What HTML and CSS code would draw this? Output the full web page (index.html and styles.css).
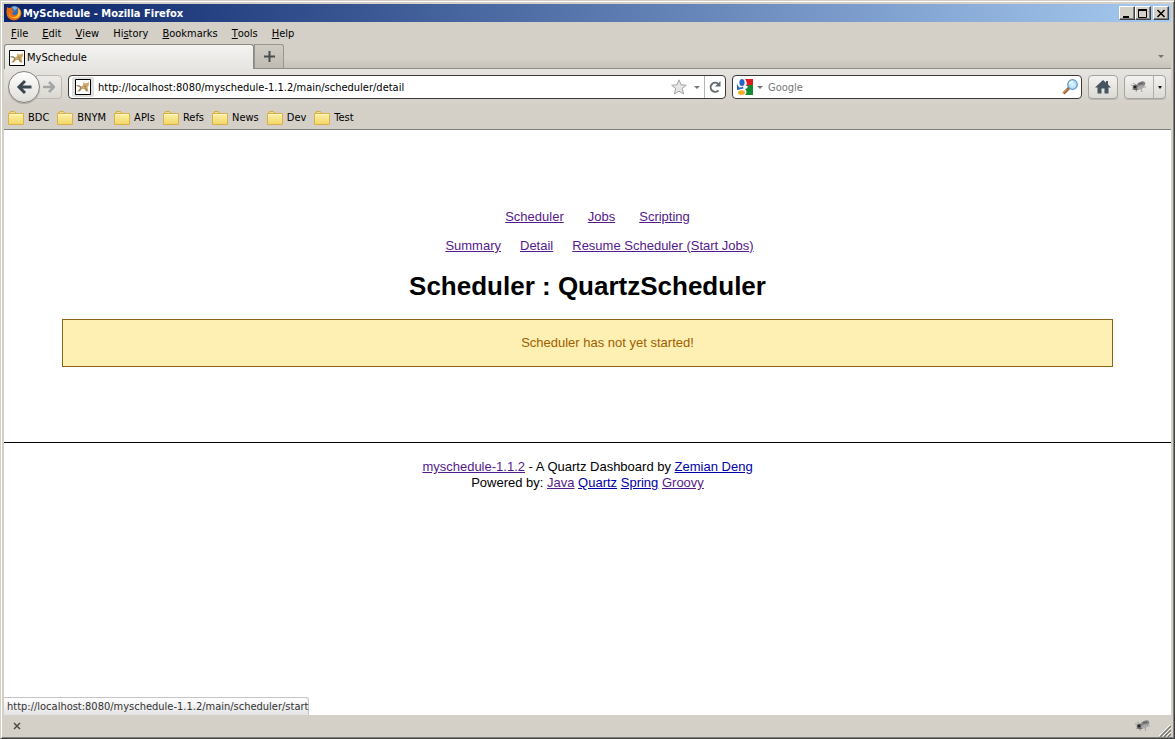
FILE: index.html
```html
<!DOCTYPE html>
<html lang="en">
<head>
<meta charset="utf-8">
<title>MySchedule</title>
<link rel="stylesheet" href="styles.css">
</head>
<body>
<svg class="symbols" aria-hidden="true">
  <defs>
    <linearGradient id="folder-fill" x1="0" y1="0" x2="0" y2="1"><stop offset="0" stop-color="#fdf2a8"/><stop offset="1" stop-color="#f2d566"/></linearGradient>
    <radialGradient id="lens-fill"><stop offset="0" stop-color="#e2f6ff"/><stop offset="1" stop-color="#a5d8fa"/></radialGradient>
    <symbol id="folder" viewBox="0 0 16 16">
      <path d="M1.500 14V3.500L2.500 1.500H6.500L8 3.500H14.500V14Z" fill="#f5dc85" stroke="#d6ab45"/>
      <path d="M.5 3.500H15.500V14.500H.5Z" fill="url(#folder-fill)" stroke="#d9b04c"/>
      <path d="M1.500 4.500H14.500" stroke="#fff7c8"/>
    </symbol>
    <symbol id="cat" viewBox="0 0 16 16">
      <path d="M.5 .5H15.500V15.500H.5Z" fill="#fff" stroke="#000"/>
      <path d="M1.500 7L4 6.500L6.500 7.500L8 6L8.500 3L10 4.500L12.500 4L13.500 2.500L14 6L12.500 8L13.500 12.500H11L9.500 10L7 10L5 12.500H2L4 10.500L5 8.500Z" fill="#cfa968"/>
      <path d="M1.500 6.500L5 7L6 9L4 12M9 7L11 8M12 12L10 9" fill="none" stroke="#75705f" stroke-width=".8"/>
    </symbol>
    <symbol id="bug" viewBox="0 0 18 16">
      <path d="M1 6L5 7M2 11L5 9M6 13L7 10M12 13L11 10M16 8L12 8M3 4L6 6" stroke="#a0a09c" fill="none"/>
      <ellipse cx="6" cy="8.500" rx="3.300" ry="2.800" fill="#666"/>
      <ellipse cx="11" cy="5.500" rx="4.500" ry="2.800" transform="rotate(-25 11 5.500)" fill="#858585"/>
      <ellipse cx="10.500" cy="8.500" rx="3.500" ry="1.800" transform="rotate(-20 10.500 8.500)" fill="#aaa"/>
      <circle cx="5" cy="8" r="1.300" fill="#222"/><path d="M9 5L13 4" stroke="#555"/>
    </symbol>
  </defs>
</svg>
<div class="window">
  <header class="titlebar">
    <svg class="icon16" viewBox="0 0 16 16" aria-hidden="true">
      <circle cx="8.500" cy="7.500" r="6.500" fill="#356ab5"/>
      <path d="M6 2Q9 0 12 3Q9 4 9 6Z" fill="#79b4e4"/>
      <path d="M1 2Q2 3 4 3Q6 2 7 3Q5 4 6 5L8 6Q8 7 6 8Q7 11 10 10Q13 9 12 5L11 2Q15 4 15.500 8Q15 15 8 15.500Q1 15 .5 8Q.4 5 1 2Z" fill="#e66a10"/>
      <path d="M12 3Q16 7 13.500 11Q11 14 7 13Q3 12 3 8Q4 13 9 12Q13 11 12 3Z" fill="#ffc52e"/>
    </svg>
    <span class="title">MySchedule - Mozilla Firefox</span>
    <div class="window-buttons">
      <button aria-label="Minimize"><svg viewBox="0 0 12 11"><path d="M2 9H8" stroke="#000" stroke-width="2"/></svg></button>
      <button aria-label="Maximize"><svg viewBox="0 0 12 11"><path d="M1.500 1V9.500H9.500V1" fill="none" stroke="#000"/><path d="M1 2H10" stroke="#000" stroke-width="2"/></svg></button>
      <button aria-label="Close" class="close"><svg viewBox="0 0 12 11"><path d="M2.500 2L9.500 9M9.500 2L2.500 9" stroke="#000" stroke-width="1.500"/></svg></button>
    </div>
  </header>
  <nav class="menubar" aria-label="Menu">
    <button><u>F</u>ile</button><button><u>E</u>dit</button><button><u>V</u>iew</button><button>Hi<u>s</u>tory</button><button><u>B</u>ookmarks</button><button><u>T</u>ools</button><button><u>H</u>elp</button>
  </nav>
  <div class="tabs">
    <button class="tab"><svg class="icon16" aria-hidden="true"><use href="#cat"/></svg>MySchedule</button>
    <button class="new-tab" aria-label="New tab"><svg viewBox="0 0 11 11"><path d="M5.500 0V11M0 5.500H11" stroke="#4b4e50" stroke-width="2"/></svg></button>
    <button class="all-tabs" aria-label="List all tabs"><svg class="arrow" viewBox="0 0 6 3"><path d="M0 0H6L3 3Z" fill="#77736c"/></svg></button>
  </div>
  <div class="navbar">
    <div class="history">
      <button class="back" aria-label="Back"><svg viewBox="0 0 16 16"><path d="M9 2L3 8L9 14M3 8H15.500" fill="none" stroke="#394751" stroke-width="3"/></svg></button>
      <button class="forward" aria-label="Forward"><svg viewBox="0 0 12 12"><path d="M6 1L11 6L6 11M11 6H0" fill="none" stroke="#a2a6a7" stroke-width="2.500"/></svg></button>
    </div>
    <form class="field address">
      <span class="site"><svg class="icon16" aria-hidden="true"><use href="#cat"/></svg></span>
      <input aria-label="Address" value="http://localhost:8080/myschedule-1.1.2/main/scheduler/detail">
      <svg class="star" viewBox="0 0 16 16" aria-hidden="true"><path d="M8 .8L10 5.800L15.300 6.200L11.300 9.600L12.600 15L8 12.200L3.400 15L4.700 9.600L.7 6.200L6 5.800Z" fill="#e5e5e5" stroke="#a4a4a4"/></svg>
      <svg class="arrow" viewBox="0 0 6 3" aria-hidden="true"><path d="M0 0H6L3 3Z" fill="#777"/></svg>
      <button type="button" class="reload" aria-label="Reload"><svg viewBox="0 0 12 12"><path d="M9.500 9.300A4.500 4.500 0 1 1 9 2.800" fill="none" stroke="#666c70" stroke-width="2"/><path d="M11.500 0V5.500H6Z" fill="#666c70"/></svg></button>
    </form>
    <form class="field search">
      <svg class="icon16" viewBox="0 0 16 16" aria-hidden="true"><path d="M0 0H16V16H0Z" fill="#fff"/><path d="M8 0H16V7H9Q11 4 8 0Z" fill="#e01b20"/><path d="M10 6H16V16H8Q11 13 8 10Q12 9 10 6Z" fill="#158a35"/><path d="M0 5L2 8V10H0Z" fill="#2b64c8"/><ellipse cx="5" cy="3.500" rx="2.600" ry="3.500" fill="#2b64c8"/><path d="M0 8Q4 9 6 7.500L6.500 9.500Q3 10 0 11Z" fill="#2b64c8"/><ellipse cx="4.500" cy="13.500" rx="3.500" ry="2.300" fill="#f5ae24"/></svg>
      <svg class="arrow" viewBox="0 0 6 3" aria-hidden="true"><path d="M0 0H6L3 3Z" fill="#777"/></svg>
      <input aria-label="Search" placeholder="Google">
      <svg class="icon16" viewBox="0 0 16 16" aria-hidden="true"><path d="M7 9L1.500 14.500" stroke="#9d6238" stroke-width="3"/><path d="M5.500 9.800L1 14.300" stroke="#deb07a"/><circle cx="10.500" cy="5.500" r="4.800" fill="url(#lens-fill)" stroke="#6598c3" stroke-width="1.200"/><path d="M7.500 5Q8 2.500 11 2.300" fill="none" stroke="#fff" stroke-width="1.300"/></svg>
    </form>
    <button class="tool" aria-label="Home"><svg class="icon16" viewBox="0 0 16 16"><path d="M8 1L0 8.500H2.500V14.500H6.500V9.500H9.500V14.500H13.500V8.500H16L13 5.600V2H11V3.800Z" fill="#45545f"/></svg></button>
    <div class="split">
      <button class="bug" aria-label="Firebug"><svg viewBox="0 0 18 16"><use href="#bug"/></svg></button>
      <button class="more" aria-label="Firebug menu"><svg class="arrow" viewBox="0 0 6 3"><path d="M1 0H5L3 3Z" fill="#000"/></svg></button>
    </div>
  </div>
  <nav class="bookmarks" aria-label="Bookmarks">
    <button><svg class="icon16"><use href="#folder"/></svg>BDC</button>
    <button><svg class="icon16"><use href="#folder"/></svg>BNYM</button>
    <button><svg class="icon16"><use href="#folder"/></svg>APIs</button>
    <button><svg class="icon16"><use href="#folder"/></svg>Refs</button>
    <button><svg class="icon16"><use href="#folder"/></svg>News</button>
    <button><svg class="icon16"><use href="#folder"/></svg>Dev</button>
    <button><svg class="icon16"><use href="#folder"/></svg>Test</button>
  </nav>
  <div class="viewport">
    <main>
      <nav class="links primary"><a class="visited" href="#scheduler">Scheduler</a><a class="visited" href="#jobs">Jobs</a><a class="visited" href="#scripting">Scripting</a></nav>
      <nav class="links secondary"><a class="visited" href="#summary">Summary</a><a class="visited" href="#detail">Detail</a><a class="visited" href="#start">Resume Scheduler (Start Jobs)</a></nav>
      <h1>Scheduler : QuartzScheduler</h1>
      <p class="warning">Scheduler has not yet started!</p>
    </main>
    <footer>
      <div><a class="visited" href="#home">myschedule-1.1.2</a> - A Quartz Dashboard by <a href="#author">Zemian Deng</a></div>
      <div>Powered by: <a class="visited" href="#java">Java</a> <a href="#quartz">Quartz</a> <a href="#spring">Spring</a> <a class="visited" href="#groovy">Groovy</a></div>
    </footer>
    <div class="link-status">http://localhost:8080/myschedule-1.1.2/main/scheduler/start</div>
  </div>
  <div class="statusbar">
    <button aria-label="Close add-on bar"><svg class="x" viewBox="0 0 8 8"><path d="M1 1L7 7M7 1L1 7" stroke="#4b4b48" stroke-width="1.500"/></svg></button>
    <button class="addon" aria-label="Firebug"><svg viewBox="0 0 18 16"><use href="#bug"/></svg></button>
    <svg class="grip" viewBox="0 0 12 12" aria-hidden="true"><path d="M1 12L12 1M5 12L12 5M9 12L12 9" stroke="#7c7970" stroke-width="1.500"/><path d="M0 11L11 0M4 11L12 3M8 11L12 7" stroke="#fff"/></svg>
  </div>
</div>
</body>
</html>
```

FILE: styles.css
```css
* { box-sizing: border-box; }
body { margin: 0; background: #d4d0c8; }
svg { display: block; flex: none; }
.symbols { position: absolute; width: 0; height: 0; }
button { margin: 0; padding: 0; border: 0; background: none; color: inherit; font: inherit; display: flex; align-items: center; }
.icon16 { width: 16px; height: 16px; }
.arrow { width: 6px; height: 3px; }

.window {
  display: flex; flex-direction: column; min-height: 100vh;
  border: 1px solid; border-color: #d4d0c8 #404040 #404040 #d4d0c8;
  box-shadow: inset 1px 1px #fff, inset -1px -1px #808080;
  padding: 3px 3px 1px; color: #000;
  font: 11px/14px "DejaVu Sans Condensed", Tahoma, sans-serif;
}

.titlebar { display: flex; align-items: center; gap: 1px; height: 18px; padding: 0 2px; background: linear-gradient(90deg, #0a246a, #a6caf0); color: #fff; }
.title { flex: 1; padding-top: 1px; font-weight: bold; }
.window-buttons { display: flex; }
.window-buttons button { width: 16px; height: 14px; padding: 1px; background: #d4d0c8; border: 1px solid; border-color: #fff #404040 #404040 #fff; box-shadow: inset -1px -1px #808080; }
.window-buttons .close { margin-left: 2px; }
.window-buttons svg { width: 12px; height: 11px; }

.menubar { display: flex; gap: 14px; height: 22px; padding: 2px 7px 0; }

.tabs { display: flex; height: 25px; border-bottom: 1px solid #8e8b85; background: linear-gradient(#d4d0c8 60%, #c6c2ba); }
.tab { width: 250px; height: 25px; gap: 2px; padding: 2px 4px 0; border: 1px solid #8b8882; border-bottom: 0; border-radius: 3px 3px 0 0; background: linear-gradient(#f4f3f1, #e7e5e1); }
.new-tab { justify-content: center; width: 30px; border: 1px solid #99958e; border-bottom: 0; border-radius: 0 3px 0 0; background: linear-gradient(#d0ccc4, #bfbbb3); }
.new-tab svg { width: 11px; height: 11px; }
.all-tabs { margin-left: auto; padding: 0 7px; }

.navbar { display: flex; align-items: center; gap: 6px; height: 36px; padding: 0 5px 0 4px; background: linear-gradient(#e7e5e1, #d4d0c8); }
.history { display: flex; align-items: center; width: 54px; }
.back { z-index: 1; justify-content: center; flex: none; width: 32px; height: 32px; border: 1px solid #85827d; border-radius: 50%; background: linear-gradient(#fff, #e0deda); box-shadow: 0 1px 1px #aaa7a0; }
.back svg { width: 16px; height: 16px; }
.forward { flex: none; width: 26px; height: 24px; margin-left: -4px; padding-left: 6px; border: 1px solid #bcb9b3; border-radius: 0 4px 4px 0; background: linear-gradient(#eceae7, #dcd9d3); }
.forward svg { width: 12px; height: 12px; }
.field { display: flex; align-items: center; min-width: 0; height: 24px; margin: 0; border: 1px solid #3c3a38; border-radius: 4px; background: #fff; }
.field input { flex: 1; min-width: 0; height: 20px; padding: 1px 0 0; border: 0; outline: 0; background: none; font: inherit; color: #000; }
.field input::placeholder { color: #777; opacity: 1; }
.address { flex: 658 1 658px; }
.site { width: 22px; height: 20px; margin: 0 4px 0 3px; padding: 2px 3px; border-radius: 2px; background: #dfdfdf; }
.star { width: 16px; height: 16px; margin-right: 7px; }
.reload { justify-content: center; width: 21px; height: 22px; margin-left: 4px; border-left: 1px solid #b5b5b5; }
.reload svg { width: 12px; height: 12px; }
.search { flex: 350 1 350px; gap: 4px; padding: 0 3px 0 4px; }
.search .arrow { margin-right: 1px; }
.tool, .split { flex: none; height: 24px; border: 1px solid #a7a49e; border-radius: 4px; background: linear-gradient(#f3f2f0, #dcdad5); box-shadow: 0 1px #b9b6af; }
.tool { justify-content: center; width: 30px; }
.split { display: flex; width: 42px; }
.bug { justify-content: center; width: 29px; border-right: 1px solid #b2afa9; }
.bug svg, .addon svg { width: 18px; height: 16px; }
.more { justify-content: center; flex: 1; }

.bookmarks { display: flex; gap: 8px; height: 25px; padding: 1px 4px 0; border-bottom: 1px solid #808080; }
.bookmarks button { gap: 4px; }

.viewport { position: relative; flex: 1; padding-top: 79px; background: #fff; font: 13px/16px "Liberation Sans", Arial, sans-serif; }
main { padding: 0 5%; }
.links { display: flex; justify-content: center; }
.primary { gap: 24px; padding-left: 20px; margin-bottom: 13px; }
.secondary { gap: 19px; padding-left: 24px; }
a { color: #0000a8; }
.visited { color: #551a8b; }
h1 { margin: 17px 0 18px; font-size: 26px; line-height: 30px; text-align: center; }
.warning { margin: 0 0 75px; padding: 15px 0 15px 40px; border: 1px solid #8b6416; background: #feefb3; color: #9f6000; text-align: center; }
footer { padding-top: 16px; border-top: 1px solid #000; text-align: center; }
.link-status { position: absolute; left: 0; bottom: 0; padding: 2px 0 1px 3px; border: 1px solid #c5c5c5; border-width: 1px 1px 0 0; border-radius: 0 3px 0 0; background: linear-gradient(#fff, #e3e3e3); color: #333; font: 11px/14px "DejaVu Sans Condensed", Tahoma, sans-serif; }

.statusbar { display: flex; align-items: center; height: 22px; padding-left: 9px; }
.x { width: 8px; height: 8px; }
.addon { margin-left: auto; margin-right: 7px; }
.grip { width: 12px; height: 12px; align-self: flex-end; }
```
